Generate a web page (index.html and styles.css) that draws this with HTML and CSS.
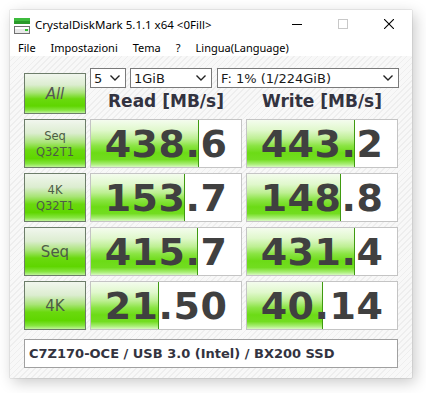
FILE: index.html
```html
<!DOCTYPE html>
<html>
<head>
<meta charset="utf-8">
<link rel="stylesheet" href="styles.css">
</head>
<body>
<div class="window">
  <div class="titlebar">
    <svg class="app-icon" width="16" height="16" viewBox="0 0 16 16">
      <rect x="0" y="0" width="16" height="3" fill="#3dbb3d"/>
      <rect x="0" y="3" width="16" height="3" fill="#2a9a2a"/>
      <rect x="0.5" y="8.5" width="15" height="7" fill="#e8e8e8" stroke="#707070"/>
      <rect x="1" y="9" width="14" height="2" fill="#ffffff"/>
      <rect x="11" y="11" width="3" height="2" fill="#30c030"/>
    </svg>
    <span class="title">CrystalDiskMark 5.1.1 x64 &lt;0Fill&gt;</span>
    <div class="controls">
      <div class="ctl"><svg width="10" height="10" viewBox="0 0 10 10"><line x1="0" y1="5.5" x2="10" y2="5.5" stroke="#000" stroke-width="1"/></svg></div>
      <div class="ctl"><svg width="10" height="10" viewBox="0 0 10 10"><rect x="0.5" y="0.5" width="9" height="9" fill="none" stroke="#c8c8c8" stroke-width="1"/></svg></div>
      <div class="ctl"><svg width="10" height="10" viewBox="0 0 10 10"><path d="M0 0 L10 10 M10 0 L0 10" stroke="#000" stroke-width="1.1"/></svg></div>
    </div>
  </div>
  <div class="menubar">
    <span>File</span><span>Impostazioni</span><span>Tema</span><span>?</span><span>Lingua(Language)</span>
  </div>
  <div class="client">
    <div class="grid">
      <div class="btn all">All</div>
      <div class="head">
        <div class="selects">
          <div class="sel s1"><span>5</span><svg class="chev" width="10" height="6" viewBox="0 0 10 6"><polyline points="0.5,0.5 5,5 9.5,0.5" fill="none" stroke="#222" stroke-width="1.4"/></svg></div>
          <div class="sel s2"><span>1GiB</span><svg class="chev" width="10" height="6" viewBox="0 0 10 6"><polyline points="0.5,0.5 5,5 9.5,0.5" fill="none" stroke="#222" stroke-width="1.4"/></svg></div>
          <div class="sel s3"><span>F: 1% (1/224GiB)</span><svg class="chev" width="10" height="6" viewBox="0 0 10 6"><polyline points="0.5,0.5 5,5 9.5,0.5" fill="none" stroke="#222" stroke-width="1.4"/></svg></div>
        </div>
        <div class="cols"><span>Read [MB/s]</span><span>Write [MB/s]</span></div>
      </div>

      <div class="btn lbl small">Seq<br>Q32T1</div>
      <div class="val"><div class="bar" style="width:72.0%"></div><span>438.6</span></div>
      <div class="val"><div class="bar" style="width:72.1%"></div><span>443.2</span></div>

      <div class="btn lbl small">4K<br>Q32T1</div>
      <div class="val"><div class="bar" style="width:62.6%"></div><span>153.7</span></div>
      <div class="val"><div class="bar" style="width:62.4%"></div><span>148.8</span></div>

      <div class="btn lbl big">Seq</div>
      <div class="val"><div class="bar" style="width:71.5%"></div><span>415.7</span></div>
      <div class="val"><div class="bar" style="width:71.9%"></div><span>431.4</span></div>

      <div class="btn lbl big">4K</div>
      <div class="val"><div class="bar" style="width:45.0%"></div><span>21.50</span></div>
      <div class="val"><div class="bar" style="width:50.6%"></div><span>40.14</span></div>
    </div>
    <div class="comment">C7Z170-OCE / USB 3.0 (Intel) / BX200 SSD</div>
  </div>
</div>
</body>
</html>
```
FILE: styles.css
```css
html, body {
  margin: 0;
  padding: 0;
}
body {
  background: #ffffff;
  width: 426px;
  height: 393px;
  overflow: hidden;
  font-family: "DejaVu Sans", sans-serif;
}
.window {
  margin: 10px 0 0 10px;
  width: 402px;
  height: 368px;
  background: #ffffff;
  box-shadow: 3px 4px 14px rgba(0, 0, 0, 0.22), 0 0 1px rgba(0, 0, 0, 0.35);
  display: flex;
  flex-direction: column;
}
.titlebar {
  height: 28px;
  display: flex;
  align-items: center;
  flex: none;
}
.app-icon {
  margin-left: 4px;
  margin-top: 4px;
  flex: none;
}
.title {
  margin-left: 5px;
  font-family: "Noto Sans", sans-serif;
  font-size: 11.5px;
  color: #000;
}
.controls {
  margin-left: auto;
  display: flex;
  height: 28px;
}
.ctl {
  width: 46px;
  height: 28px;
  display: flex;
  align-items: center;
  justify-content: center;
}
.menubar {
  height: 18px;
  flex: none;
  display: flex;
  align-items: center;
  gap: 15px;
  padding-left: 8px;
  font-family: "Noto Sans", sans-serif;
  font-size: 11px;
  color: #000;
}
.client {
  flex: 1;
  padding: 12px 14px 10px 14px;
  background: repeating-linear-gradient(135deg, #f8f8f8 0px, #f8f8f8 3px, #eeeeee 3px, #eeeeee 4.2px);
}
.grid {
  display: grid;
  grid-template-columns: 62px 152px 152px;
  grid-template-rows: 46px 49px 49px 49px 49px;
  column-gap: 4px;
  row-gap: 5px;
}
.btn {
  box-sizing: border-box;
  border: 1px solid #6d7d6a;
  background: linear-gradient(to bottom, #f1f6ee 0%, #dcedd0 28%, #a8e476 48%, #6ad90e 64%, #5fd600 82%, #86e540 93%, #bff39a 100%);
  display: flex;
  align-items: center;
  justify-content: center;
  text-align: center;
  color: #4d5c46;
}
.all {
  align-self: end;
  height: 41px;
  font-style: italic;
  font-size: 15px;
  color: #555;
}
.head {
  grid-column: 2 / 4;
  display: flex;
  flex-direction: column;
}
.selects {
  display: flex;
  height: 20px;
  width: 309px;
}
.sel {
  box-sizing: border-box;
  height: 20px;
  border: 1px solid #7a7a7a;
  background: #fff;
  display: flex;
  align-items: center;
  padding: 0 5px 0 3px;
  font-size: 13px;
  color: #1a1a1a;
}
.sel .chev {
  margin-left: auto;
}
.s1 { width: 36px; }
.s2 { width: 82px; margin-left: 4px; }
.s3 { width: 182px; margin-left: 5px; }
.cols {
  height: 26px;
  display: flex;
  gap: 4px;
}
.cols span {
  width: 152px;
  text-align: center;
  line-height: 26px;
  font-weight: bold;
  font-size: 17px;
  color: #333340;
}
.lbl.small {
  font-size: 11.5px;
  line-height: 16px;
}
.lbl.big {
  font-size: 15px;
}
.val {
  position: relative;
  box-sizing: border-box;
  border: 1px solid #c4c4c4;
  background: #fff;
  display: flex;
  align-items: center;
  justify-content: center;
}
.bar {
  position: absolute;
  left: 0;
  top: 0;
  bottom: 0;
  box-sizing: border-box;
  border-right: 1px solid #3f9a10;
  background: linear-gradient(to bottom, #f4fcee 0%, #e0f8cc 22%, #bdef92 40%, #8ae443 55%, #6cdb16 70%, #72dd20 84%, #a9ee76 94%, #d8f8c2 100%);
}
.val span {
  position: relative;
  font-weight: bold;
  font-size: 38px;
  color: #404040;
  letter-spacing: 0.5px;
}
.comment {
  margin-top: 9px;
  box-sizing: border-box;
  height: 29px;
  width: 374px;
  border: 1px solid #a0a0a0;
  background: #fff;
  display: flex;
  align-items: center;
  padding-left: 4px;
  font-weight: bold;
  font-size: 13px;
  color: #333340;
}
```
